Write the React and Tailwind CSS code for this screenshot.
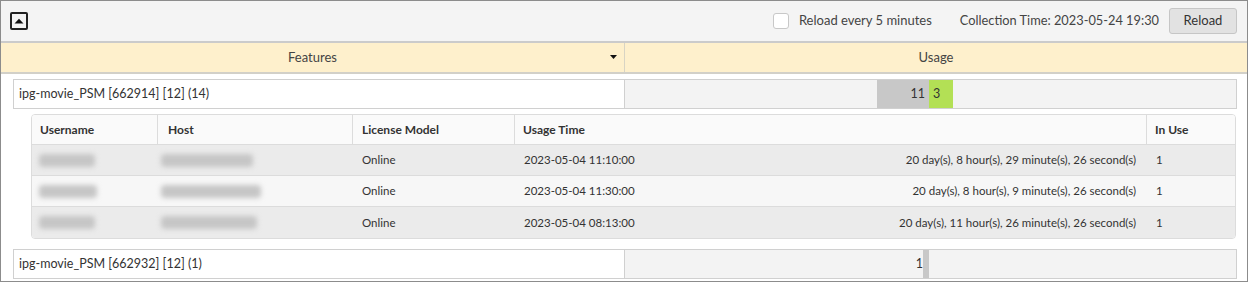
import React from "react";

const rows = [
  { user: 56, host: 92, date: "2023-05-04 11:10:00", dur: "20 day(s), 8 hour(s), 29 minute(s), 26 second(s)", bg: "bg-[#ebebeb]" },
  { user: 58, host: 100, date: "2023-05-04 11:30:00", dur: "20 day(s), 8 hour(s), 9 minute(s), 26 second(s)", bg: "bg-[#f7f7f7]" },
  { user: 56, host: 96, date: "2023-05-04 08:13:00", dur: "20 day(s), 11 hour(s), 26 minute(s), 26 second(s)", bg: "bg-[#ebebeb]" },
];

function FeatureRow({ name, children }) {
  return (
    <div className="flex h-[30px] ml-[12px] mr-[10px] border border-[#d0d0d0]">
      <div className="w-[611px] bg-white border-r border-[#d0d0d0] flex items-center pl-[5px] text-[12.5px] text-[#333]">
        {name}
      </div>
      <div className="flex-1 bg-[#f3f3f3] grid grid-cols-[304px_1fr]">{children}</div>
    </div>
  );
}

function Blur({ w }) {
  return <div className="h-[13px] bg-[#c6c6c6] blur-[2.5px] rounded" style={{ width: w }} />;
}

export default function App() {
  return (
    <div className="w-[1248px] h-[282px] border border-[#8c8c8c] bg-white text-[#333]" style={{ fontFamily: "Lato, 'Noto Sans', sans-serif" }}>
      <div className="h-[42px] bg-[#f4f4f4] border-b-2 border-[#cbcbcb] flex items-center pl-[9px] pr-[10px]">
        <div className="w-[18px] h-[18px] border-2 border-[#222] rounded-[2px] flex items-center justify-center">
          <svg width="10" height="6" viewBox="0 0 10 6"><path d="M0.5 5.5 L5 0.8 L9.5 5.5 Z" fill="#111" /></svg>
        </div>
        <div className="ml-auto flex items-center text-[13px] text-[#444]">
          <div className="w-[16px] h-[16px] bg-white border border-[#c8c8c8] rounded-[3px]" />
          <span className="ml-[10px]">Reload every 5 minutes</span>
          <span className="ml-[28px] text-[12.8px]">Collection Time: 2023-05-24 19:30</span>
          <button className="ml-[10px] h-[26px] w-[68px] bg-[#e2e2e2] border border-[#c6c6c6] rounded-[3px] text-[13px] text-[#333]">Reload</button>
        </div>
      </div>
      <div className="h-[31px] bg-[#fef0cc] border-b-2 border-[#d2d0c8] flex text-[13px] text-[#444]">
        <div className="w-[624px] border-r border-[#d8d4c4] flex items-center justify-center relative">
          Features
          <svg className="absolute right-[7px] top-[12px]" width="7" height="5" viewBox="0 0 7 5"><path d="M0 0 H7 L3.5 4 Z" fill="#111" /></svg>
        </div>
        <div className="flex-1 flex items-center justify-center">Usage</div>
      </div>

      <div className="pt-[5px]">
        <FeatureRow name="ipg-movie_PSM [662914] [12] (14)">
          <div className="flex justify-end">
            <div className="w-[52px] bg-[#c8c8c8] flex items-center justify-end pr-[4px] text-[12.5px]">11</div>
          </div>
          <div className="flex">
            <div className="w-[24px] bg-[#b3e055] flex items-center pl-[4px] text-[12.5px]">3</div>
          </div>
        </FeatureRow>

        <div className="ml-[30px] mr-[11px] mt-[5px] border border-[#dcdcdc] rounded-[4px] overflow-hidden text-[11.5px] text-[#333]">
          <div className="flex h-[30px] bg-[#fafafa] border-b border-[#dcdcdc] font-bold text-[12px]">
            <div className="w-[126px] border-r border-[#dcdcdc] flex items-center pl-[8px]">Username</div>
            <div className="w-[195px] border-r border-[#dcdcdc] flex items-center pl-[10px]">Host</div>
            <div className="w-[162px] border-r border-[#dcdcdc] flex items-center pl-[9px]">License Model</div>
            <div className="w-[632px] border-r border-[#dcdcdc] flex items-center pl-[8px]">Usage Time</div>
            <div className="flex-1 flex items-center pl-[8px]">In Use</div>
          </div>
          {rows.map((r, i) => (
            <div key={i} className={`flex h-[31px] ${r.bg} ${i < 2 ? "border-b border-[#dcdcdc]" : ""}`}>
              <div className="w-[126px] flex items-center pl-[7px]"><Blur w={r.user} /></div>
              <div className="w-[195px] flex items-center pl-[3px]"><Blur w={r.host} /></div>
              <div className="w-[162px] flex items-center pl-[9px]">Online</div>
              <div className="w-[632px] flex items-center justify-between pl-[9px] pr-[11px]">
                <span>{r.date}</span>
                <span>{r.dur}</span>
              </div>
              <div className="flex-1 flex items-center pl-[9px]">1</div>
            </div>
          ))}
        </div>

        <div className="mt-[10px]">
          <FeatureRow name="ipg-movie_PSM [662932] [12] (1)">
            <div className="flex justify-end">
              <div className="w-[5px] bg-[#c8c8c8] flex items-center justify-end pr-[6px] text-[12.5px] whitespace-nowrap">1</div>
            </div>
            <div />
          </FeatureRow>
        </div>
      </div>
    </div>
  );
}
